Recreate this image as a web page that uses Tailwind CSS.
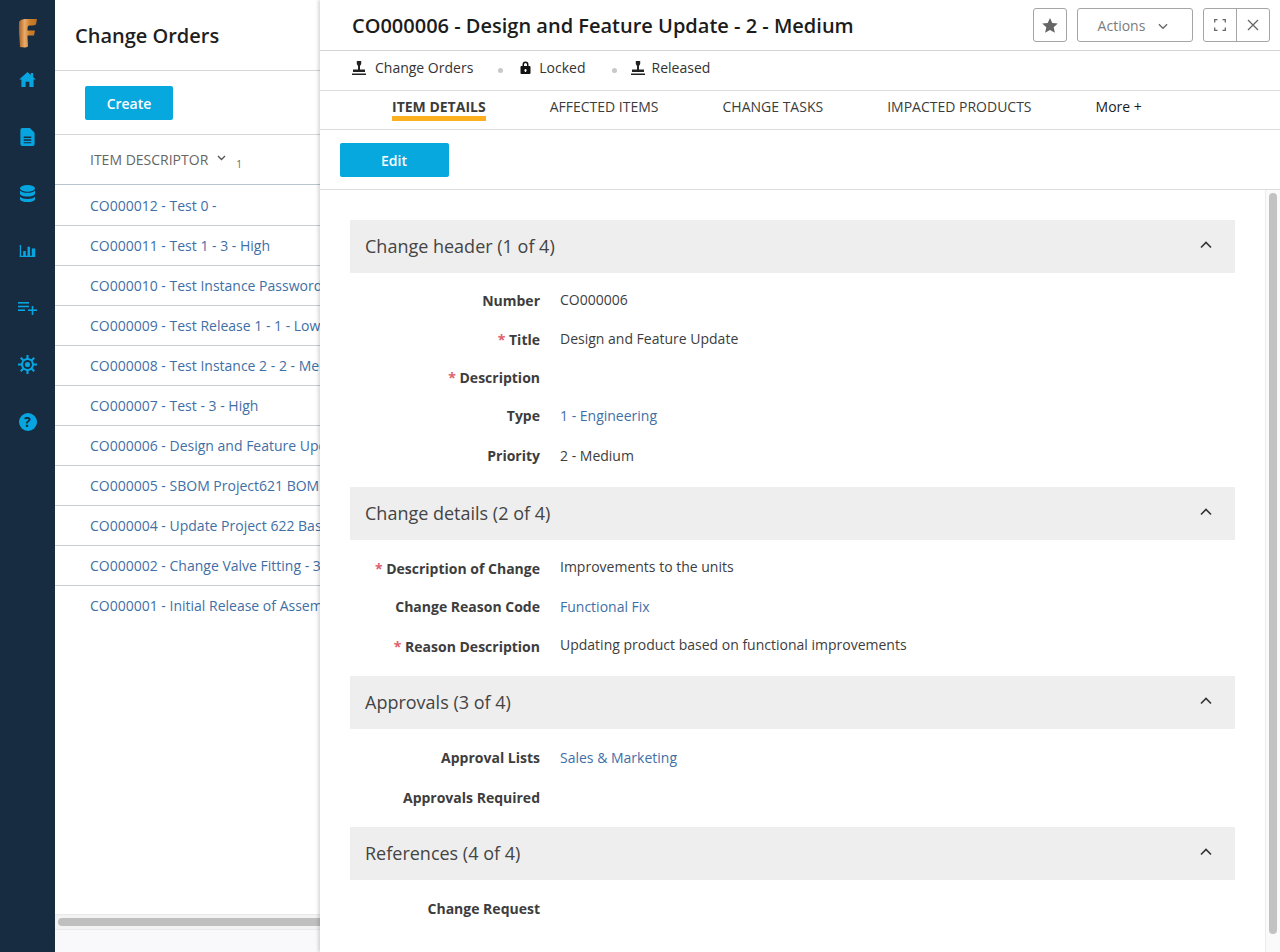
<!DOCTYPE html>
<html lang="en">
<head>
<meta charset="utf-8">
<title>Change Orders</title>
<script src="https://cdn.jsdelivr.net/npm/@tailwindcss/browser@4"></script>
</head>
<body class="m-0 bg-white">
<div class="flex h-[952px] w-[1280px] overflow-hidden font-['Open_Sans',sans-serif] text-[14px] text-[#3d3d3d]">

  <!-- Icon rail -->
  <nav class="flex h-full w-[55px] shrink-0 flex-col items-center bg-[#172b41]">
    <svg class="mt-[18px] shrink-0" width="20" height="30" viewBox="0 0 20 30">
      <defs>
        <linearGradient id="fg" x1="0" x2="1" y1="0" y2="0">
          <stop offset="0" stop-color="#a9601f"/><stop offset="0.32" stop-color="#e9ac6c"/><stop offset="0.6" stop-color="#cf7f28"/><stop offset="1" stop-color="#bd7026"/>
        </linearGradient>
      </defs>
      <path fill="url(#fg)" d="M1 4C3 1 6 1 8 1h11l-1 5.500C16 8 12 7 10 8c-.5 1.500-.500 3-.500 4.500H17l-1 5h-6.500c0 4 .5 7 .5 11-2 1.500-5 1-8 .5C1.500 20 .5 12 1 4z"/>
    </svg>
    <svg class="mt-[24px] shrink-0" width="17" height="15" viewBox="0 0 18 16"><path fill="#07a5e0" d="M9 0 0 8h2.500v8h4.500v-5.500h4V16h4.500V8H18l-3-2.700V1h-2.500v2.100z"/></svg>
    <svg class="mt-[41px] shrink-0" width="15" height="18" viewBox="0 0 15 19"><path fill-rule="evenodd" fill="#07a5e0" d="M2 0h8l5 5v12a2 2 0 0 1-2 2H2a2 2 0 0 1-2-2V2a2 2 0 0 1 2-2zM3.500 9v1.500h8V9zm0 3v1.500h8V12zm0 3v1h8v-1z"/></svg>
    <svg class="mt-[39px] shrink-0" width="15" height="17" viewBox="0 0 16 18"><g fill="#07a5e0"><ellipse cx="8" cy="3.500" rx="8" ry="3.500"/><path d="M0 6c1 2 4.500 2.800 8 2.800S15 8 16 6v4c-1 2-4.500 2.800-8 2.800S1 12 0 10z" transform="translate(0 -.5)"/><path d="M0 12.500c1.500 1.800 4.500 2.300 8 2.300s6.500-.5 8-2.300V15c-.5 2-4 3-8 3s-7.500-1-8-3z"/></g></svg>
    <svg class="mt-[43px] shrink-0" width="17" height="12" viewBox="0 0 18 14"><g fill="#07a5e0"><rect x="0" y="0" width="1.500" height="14"/><rect x="0" y="12.500" width="18" height="1.500"/><rect x="4" y="7" width="3" height="6"/><rect x="9" y="2" width="3" height="11"/><rect x="14" y="4" width="4" height="9"/></g></svg>
    <svg class="mt-[45px] shrink-0" width="19" height="13" viewBox="0 0 19 13"><g fill="#07a5e0"><rect x="0" y="0" width="11" height="1.600"/><rect x="0" y="3.700" width="11" height="1.600"/><rect x="0" y="7.400" width="7" height="1.600"/><rect x="10" y="7.400" width="9" height="1.600"/><rect x="13.700" y="4" width="1.600" height="9"/></g></svg>
    <svg class="mt-[40px] shrink-0" width="19" height="19" viewBox="0 0 20 20">
      <g stroke="#07a5e0" stroke-width="2.200"><path d="M10 0v20M0 10h20M2.900 2.900l14.200 14.200M17.100 2.900 2.900 17.100"/></g>
      <circle cx="10" cy="10" r="6.800" fill="#07a5e0"/><circle cx="10" cy="10" r="4.700" fill="#172b41"/><circle cx="10" cy="10" r="2.700" fill="#07a5e0"/>
    </svg>
    <div class="mt-[39px] flex h-[18px] w-[18px] shrink-0 items-center justify-center rounded-full bg-[#07a5e0] text-[14px] font-bold leading-none text-[#172b41]">?</div>
  </nav>

  <!-- List pane -->
  <section class="flex h-full w-[265px] shrink-0 flex-col overflow-hidden bg-white">
    <h1 class="flex h-[71px] shrink-0 items-center border-b border-[#d4d7da] pl-[20px] pt-[2px] text-[20px] font-semibold text-[#1f1f1f]">Change Orders</h1>
    <div class="h-[64px] shrink-0 border-b border-[#d4d7da] pl-[30px] pt-[15px]">
      <button class="h-[34px] w-[88px] rounded-[2px] bg-[#07a8de] text-[14px] font-semibold text-white">Create</button>
    </div>
    <div class="flex h-[50px] shrink-0 items-center border-b border-[#b9c4cc] pl-[35px] text-[#666]">
      <span class="whitespace-nowrap">ITEM DESCRIPTOR</span>
      <svg class="mb-[3px] ml-[9px]" width="9" height="6" viewBox="0 0 9 6"><path d="M1 1l3.500 3.500L8 1" fill="none" stroke="#555" stroke-width="1.400"/></svg>
      <span class="ml-[10px] mt-[9px] text-[10px] leading-none">1</span>
    </div>
    <ul class="flex flex-col text-[#3f6fa5]">
      <li class="flex h-[41px] items-center border-b border-[#c9ced2] pl-[35px]"><span class="w-[230px] shrink-0 whitespace-nowrap">CO000012 - Test 0 -</span></li>
      <li class="flex h-[40px] items-center border-b border-[#c9ced2] pl-[35px]"><span class="w-[230px] shrink-0 whitespace-nowrap">CO000011 - Test 1 - 3 - High</span></li>
      <li class="flex h-[40px] items-center border-b border-[#c9ced2] pl-[35px]"><span class="w-[230px] shrink-0 whitespace-nowrap">CO000010 - Test Instance Password Reset</span></li>
      <li class="flex h-[40px] items-center border-b border-[#c9ced2] pl-[35px]"><span class="w-[230px] shrink-0 whitespace-nowrap">CO000009 - Test Release 1 - 1 - Low</span></li>
      <li class="flex h-[40px] items-center border-b border-[#c9ced2] pl-[35px]"><span class="w-[230px] shrink-0 whitespace-nowrap">CO000008 - Test Instance 2 - 2 - Medium</span></li>
      <li class="flex h-[40px] items-center border-b border-[#c9ced2] pl-[35px]"><span class="w-[230px] shrink-0 whitespace-nowrap">CO000007 - Test - 3 - High</span></li>
      <li class="flex h-[40px] items-center border-b border-[#c9ced2] pl-[35px]"><span class="w-[230px] shrink-0 whitespace-nowrap">CO000006 - Design and Feature Update</span></li>
      <li class="flex h-[40px] items-center border-b border-[#c9ced2] pl-[35px]"><span class="w-[230px] shrink-0 whitespace-nowrap">CO000005 - SBOM Project621 BOM Update</span></li>
      <li class="flex h-[40px] items-center border-b border-[#c9ced2] pl-[35px]"><span class="w-[230px] shrink-0 whitespace-nowrap">CO000004 - Update Project 622 Baseline</span></li>
      <li class="flex h-[40px] items-center border-b border-[#c9ced2] pl-[35px]"><span class="w-[230px] shrink-0 whitespace-nowrap">CO000002 - Change Valve Fitting - 3 - High</span></li>
      <li class="flex h-[40px] items-center pb-[1px] pl-[35px]"><span class="w-[230px] shrink-0 whitespace-nowrap">CO000001 - Initial Release of Assembly</span></li>
    </ul>
    <div class="mt-auto h-[16px] shrink-0 border-y border-[#e8e9ea] bg-[#f3f3f4] pl-[3px] pt-[3px]">
      <div class="h-[8px] w-full rounded-l-full bg-[#bfbfbf]"></div>
    </div>
    <div class="h-[22px] shrink-0 bg-[#f9f9fb]"></div>
  </section>

  <!-- Detail panel -->
  <main class="z-10 flex h-full w-[960px] shrink-0 flex-col bg-white shadow-[-2px_0_3px_rgba(0,0,0,0.15)]">
    <header class="flex h-[51px] shrink-0 items-center border-b border-[#d4d4d4] pl-[32px] pr-[10px]">
      <h2 class="whitespace-nowrap pt-[2px] text-[20px] font-semibold text-[#1c1c1c]">CO000006 - Design and Feature Update - 2 - Medium</h2>
      <div class="ml-auto flex items-center">
        <button class="flex h-[34px] w-[34px] items-center justify-center rounded-[3px] border border-[#a5a5a5]">
          <svg width="16" height="15" viewBox="0 0 16 15"><path fill="#666" d="M8 0l2.300 5 5.500.600-4.100 3.700 1.200 5.400L8 12l-4.900 2.700 1.200-5.400L.2 5.600 5.700 5z"/></svg>
        </button>
        <button class="ml-[10px] flex h-[34px] w-[116px] items-center justify-center rounded-[3px] border border-[#a5a5a5] pr-[4px] text-[#7b7b7b]">
          Actions
          <svg class="ml-[13px] mt-[2px]" width="10" height="7" viewBox="0 0 11 7"><path d="M1 1l4.500 4.500L10 1" fill="none" stroke="#666" stroke-width="1.400"/></svg>
        </button>
        <div class="ml-[10px] flex h-[34px] w-[67px] rounded-[3px] border border-[#a5a5a5]">
          <button class="flex flex-1 items-center justify-center border-r border-[#a5a5a5]">
            <svg width="12" height="12" viewBox="0 0 12 12"><path d="M.7 3.500V.7h2.800M8.500.7h2.800v2.800M11.300 8.500v2.800H8.500M3.500 11.300H.7V8.500" fill="none" stroke="#666" stroke-width="1.300"/></svg>
          </button>
          <button class="flex flex-1 items-center justify-center">
            <svg width="12" height="12" viewBox="0 0 12 12"><path d="M1 1l10 10M11 1 1 11" fill="none" stroke="#666" stroke-width="1.300"/></svg>
          </button>
        </div>
      </div>
    </header>

    <div class="flex h-[40px] shrink-0 items-center border-b border-[#dcdcdc] pb-[7px] pl-[32px] text-[#333]">
      <svg class="mt-[1px]" width="14" height="14" viewBox="0 0 14 14"><path fill="#222" d="M4.800 0h4.400v3L8 5v3.500h5V11H1V8.500h5V5L4.800 3zM0 12.500h14V14H0z"/></svg>
      <span class="ml-[9px]">Change Orders</span>
      <span class="ml-[25px] mt-[7px] h-[5px] w-[5px] rounded-full bg-[#c8c8c8]"></span>
      <svg class="ml-[17px] mt-[1px]" width="11" height="13" viewBox="0 0 11 13"><path fill="#111" fill-rule="evenodd" d="M2.500 5V3.500a3 3 0 0 1 6 0V5h1a1 1 0 0 1 1 1v6a1 1 0 0 1-1 1h-8a1 1 0 0 1-1-1V6a1 1 0 0 1 1-1zM4 5h3V3.500a1.500 1.500 0 0 0-3 0zm1.500 3a1.200 1.200 0 0 0-.6 2.200v.8h1.200v-.8A1.200 1.200 0 0 0 5.500 8z"/></svg>
      <span class="ml-[8px]">Locked</span>
      <span class="ml-[26px] mt-[7px] h-[5px] w-[5px] rounded-full bg-[#c8c8c8]"></span>
      <svg class="ml-[14px] mt-[1px]" width="14" height="14" viewBox="0 0 14 14"><path fill="#222" d="M4.800 0h4.400v3L8 5v3.500h5V11H1V8.500h5V5L4.800 3zM0 12.500h14V14H0z"/></svg>
      <span class="ml-[7px]">Released</span>
    </div>

    <div class="flex h-[39px] shrink-0 items-start border-b border-[#dcdcdc] pl-[72px] text-[#3c3c3c]">
      <span class="flex h-[30px] items-center border-b-[5px] border-[#fdb01e] pt-[5px] font-bold">ITEM DETAILS</span>
      <span class="ml-[64px] flex h-[25px] items-center pt-[5px]">AFFECTED ITEMS</span>
      <span class="ml-[64px] flex h-[25px] items-center pt-[5px]">CHANGE TASKS</span>
      <span class="ml-[64px] flex h-[25px] items-center pt-[5px]">IMPACTED PRODUCTS</span>
      <span class="ml-[64px] flex h-[25px] items-center pt-[5px] text-[#1c1c1c]">More +</span>
    </div>

    <div class="h-[60px] shrink-0 border-b border-[#dcdcdc] pl-[20px] pt-[13px]">
      <button class="h-[34px] w-[109px] rounded-[2px] bg-[#07a8de] pr-[1px] text-[14px] font-semibold text-white">Edit</button>
    </div>

    <div class="flex min-h-0 flex-1">
      <div class="flex-1 pl-[30px] pr-[30px] pt-[30px]">
        <div class="flex h-[53px] items-center justify-between bg-[#eeeeee] pl-[15px] pr-[23px] text-[18px] text-[#444]">
          Change header (1 of 4)
          <svg class="mb-[4px]" width="12" height="8" viewBox="0 0 12 8"><path d="M1 6.500 6 1.500l5 5" fill="none" stroke="#333" stroke-width="1.600"/></svg>
        </div>
        <dl class="pt-[8px]">
          <div class="flex h-[39px] items-center"><dt class="w-[190px] text-right font-bold">Number</dt><dd class="mb-[2px] ml-[20px]">CO000006</dd></div>
          <div class="flex h-[39px] items-center"><dt class="w-[190px] text-right font-bold"><span class="text-[#e0606e]">*</span> Title</dt><dd class="mb-[3px] ml-[20px]">Design and Feature Update</dd></div>
          <div class="flex h-[37px] items-center"><dt class="w-[190px] text-right font-bold"><span class="text-[#e0606e]">*</span> Description</dt></div>
          <div class="flex h-[39px] items-center"><dt class="w-[190px] text-right font-bold">Type</dt><dd class="ml-[20px] text-[#3f6fa5]">1 - Engineering</dd></div>
          <div class="flex h-[42px] items-center pb-[1px]"><dt class="w-[190px] text-right font-bold">Priority</dt><dd class="ml-[20px]">2 - Medium</dd></div>
        </dl>
        <div class="mt-[10px] flex h-[53px] items-center justify-between bg-[#eeeeee] pl-[15px] pr-[23px] text-[18px] text-[#444]">
          Change details (2 of 4)
          <svg class="mb-[4px]" width="12" height="8" viewBox="0 0 12 8"><path d="M1 6.500 6 1.500l5 5" fill="none" stroke="#333" stroke-width="1.600"/></svg>
        </div>
        <dl class="pt-[9px]">
          <div class="flex h-[39px] items-center"><dt class="w-[190px] text-right font-bold"><span class="text-[#e0606e]">*</span> Description of Change</dt><dd class="mb-[5px] ml-[20px]">Improvements to the units</dd></div>
          <div class="flex h-[39px] items-center pb-[2px]"><dt class="w-[190px] text-right font-bold">Change Reason Code</dt><dd class="ml-[20px] text-[#3f6fa5]">Functional Fix</dd></div>
          <div class="flex h-[39px] items-center"><dt class="w-[190px] text-right font-bold"><span class="text-[#e0606e]">*</span> Reason Description</dt><dd class="mb-[5px] ml-[20px]">Updating product based on functional improvements</dd></div>
        </dl>
        <div class="mt-[10px] flex h-[53px] items-center justify-between bg-[#eeeeee] pl-[15px] pr-[23px] text-[18px] text-[#444]">
          Approvals (3 of 4)
          <svg class="mb-[4px]" width="12" height="8" viewBox="0 0 12 8"><path d="M1 6.500 6 1.500l5 5" fill="none" stroke="#333" stroke-width="1.600"/></svg>
        </div>
        <dl class="pt-[9px]">
          <div class="flex h-[40px] items-center pb-[2px]"><dt class="w-[190px] text-right font-bold">Approval Lists</dt><dd class="ml-[20px] text-[#3f6fa5]">Sales &amp; Marketing</dd></div>
          <div class="flex h-[40px] items-center pb-[2px]"><dt class="w-[190px] text-right font-bold">Approvals Required</dt></div>
        </dl>
        <div class="mt-[9px] flex h-[53px] items-center justify-between bg-[#eeeeee] pl-[15px] pr-[23px] text-[18px] text-[#444]">
          References (4 of 4)
          <svg class="mb-[4px]" width="12" height="8" viewBox="0 0 12 8"><path d="M1 6.500 6 1.500l5 5" fill="none" stroke="#333" stroke-width="1.600"/></svg>
        </div>
        <dl class="pt-[9px]">
          <div class="flex h-[40px] items-center pb-[2px]"><dt class="w-[190px] text-right font-bold">Change Request</dt></div>
        </dl>
      </div>
      <div class="w-[15px] shrink-0 border-l border-[#ececec] bg-[#fafafa] pl-[3px] pt-[3px]">
        <div class="h-[741px] w-[8px] rounded-full bg-[#c2c2c2]"></div>
      </div>
    </div>
  </main>
</div>
</body>
</html>
